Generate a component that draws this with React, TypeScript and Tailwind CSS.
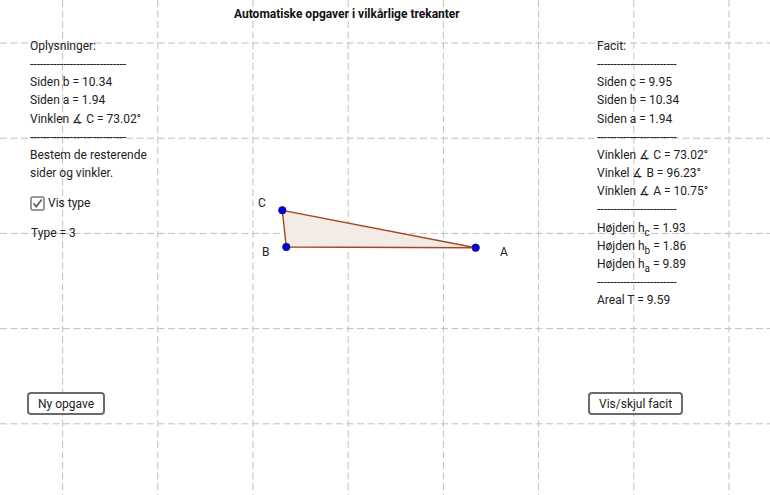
import React from "react";

const GRID_X = [0, 1, 2, 3, 4, 5, 6, 7].map((k) => 62.6 + k * 95.2);
const GRID_Y = [0, 1, 2, 3, 4].map((k) => 43 + k * 95.2);

function Grid() {
  return (
    <svg
      className="absolute inset-0"
      width={770}
      height={495}
      viewBox="0 0 770 495"
    >
      {GRID_X.map((x) => (
        <line
          key={`x${x}`}
          x1={x}
          y1={0}
          x2={x}
          y2={495}
          stroke="#c0c0c0"
          strokeWidth={1}
          strokeDasharray="7 3.5"
        />
      ))}
      {GRID_Y.map((y) => (
        <line
          key={`y${y}`}
          x1={0}
          y1={y}
          x2={770}
          y2={y}
          stroke="#c0c0c0"
          strokeWidth={1}
          strokeDasharray="7 3.5"
        />
      ))}
    </svg>
  );
}

const Dashes = ({ n }: { n: number }) => (
  <div className="leading-[18.15px]">{"-".repeat(n)}</div>
);

const Line = ({ children }: { children: React.ReactNode }) => (
  <div className="leading-[18.15px] whitespace-nowrap">{children}</div>
);

function Sub({ base, sub, value }: { base: string; sub: string; value: string }) {
  return (
    <Line>
      {base} h
      <span className="relative top-[4px] text-[10px] leading-[0]">{sub}</span>{" "}
      = {value}
    </Line>
  );
}

function Checkbox() {
  return (
    <svg width={15} height={15} viewBox="0 0 15 15">
      <rect
        x={1}
        y={1}
        width={13}
        height={13}
        rx={1.5}
        fill="#fff"
        stroke="#7a7a7a"
        strokeWidth={1.5}
      />
      <path
        d="M3.5 7.2 L6.3 10.6 L11.8 3.6"
        fill="none"
        stroke="#5a5a5a"
        strokeWidth={1.6}
      />
    </svg>
  );
}

function Triangle() {
  const C = [42.3, 20.3];
  const B = [46.3, 57];
  const A = [235.7, 57.7];
  return (
    <div className="relative mt-[153px] h-[75px] w-[348px]">
      <svg
        className="absolute inset-0"
        width={348}
        height={75}
        viewBox="0 0 348 75"
      >
        <polygon
          points={`${A.join(",")} ${B.join(",")} ${C.join(",")}`}
          fill="#f5ebe6"
          stroke="#a24a22"
          strokeWidth={1.4}
        />
        {[A, B, C].map((p, i) => (
          <circle
            key={i}
            cx={p[0]}
            cy={p[1]}
            r={3.7}
            fill="#0000f0"
            stroke="#101040"
            strokeWidth={0.8}
          />
        ))}
      </svg>
      <span className="absolute left-[18px] top-[5px] leading-[16px]">C</span>
      <span className="absolute left-[22px] top-[54px] leading-[16px]">B</span>
      <span className="absolute left-[260px] top-[54px] leading-[16px]">A</span>
    </div>
  );
}

function GgbButton({ label }: { label: string }) {
  return (
    <button
      type="button"
      className="h-[23px] rounded-[4px] border-2 border-[#6b6b6b] bg-white px-[9px] text-[12px] leading-[18px] text-[#222]"
    >
      {label}
    </button>
  );
}

export default function App() {
  return (
    <div
      className="relative h-[495px] w-[770px] overflow-hidden bg-white text-[12px] text-[#222]"
      style={{ fontFamily: "Roboto, 'Liberation Sans', sans-serif" }}
    >
      <Grid />
      <div className="relative flex h-full flex-col pb-[80px]">
        <h1 className="pl-[234px] pt-[5px] text-[12px] font-bold leading-[18px] text-[#111]">
          Automatiske opgaver i vilkårlige trekanter
        </h1>
        <div className="mt-[14px] flex flex-1">
          <div className="flex w-[240px] flex-col pl-[27px]">
            <div className="pl-[3px]">
              <Line>Oplysninger:</Line>
              <Dashes n={29} />
              <Line>Siden b = 10.34</Line>
              <Line>Siden a = 1.94</Line>
              <Line>Vinklen ∡ C = 73.02°</Line>
              <Dashes n={29} />
              <Line>Bestem de resterende</Line>
              <Line>sider og vinkler.</Line>
              <div className="mt-[12px] flex items-center gap-[3px]">
                <Checkbox />
                <span className="leading-[18px]">Vis type</span>
              </div>
              <div className="mt-[12px] pl-[1px] leading-[18px]">Type = 3</div>
            </div>
            <div className="mt-auto">
              <GgbButton label="Ny opgave" />
            </div>
          </div>
          <div className="w-[348px]">
            <Triangle />
          </div>
          <div className="flex flex-1 flex-col">
            <div className="pl-[9px]">
              <Line>Facit:</Line>
              <Dashes n={24} />
              <Line>Siden c = 9.95</Line>
              <Line>Siden b = 10.34</Line>
              <Line>Siden a = 1.94</Line>
              <Dashes n={24} />
              <Line>Vinklen ∡ C = 73.02°</Line>
              <Line>Vinkel ∡ B = 96.23°</Line>
              <Line>Vinklen ∡ A = 10.75°</Line>
              <Dashes n={24} />
              <Sub base="Højden" sub="c" value="1.93" />
              <Sub base="Højden" sub="b" value="1.86" />
              <Sub base="Højden" sub="a" value="9.89" />
              <Dashes n={24} />
              <Line>Areal T = 9.59</Line>
            </div>
            <div className="mt-auto">
              <GgbButton label="Vis/skjul facit" />
            </div>
          </div>
        </div>
      </div>
    </div>
  );
}
